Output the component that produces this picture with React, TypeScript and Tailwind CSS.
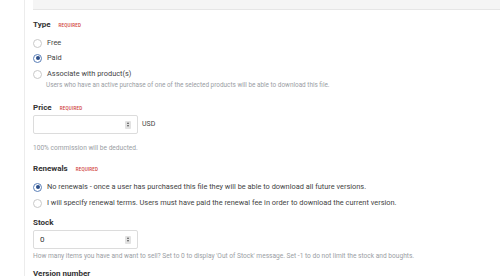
import React from 'react';

const Required = () => (
  <span className="ml-[8px] text-[4.5px] font-medium uppercase tracking-[0.2px] text-[#d0403a]">Required</span>
);

const Label = ({ children, required }: { children: React.ReactNode; required?: boolean }) => (
  <div className="flex items-baseline text-[8px] font-bold leading-[12px] text-[#333]">
    {children}
    {required && <Required />}
  </div>
);

const Radio = ({ checked, label, tall }: { checked?: boolean; label: string; tall?: boolean }) => (
  <label
    className={`flex items-center gap-[5px] text-[7.4px] text-[#444] ${tall ? 'leading-[12px]' : 'leading-[10px]'}`}
  >
    <span
      className={`flex h-[9px] w-[9px] shrink-0 items-center justify-center rounded-full border bg-white ${
        checked ? 'border-[#5a7fb8]' : 'border-[#c9c9c9]'
      }`}
    >
      {checked && <span className="h-[4px] w-[4px] rounded-full bg-[#2c4f8a]" />}
    </span>
    {label}
  </label>
);

const Spinner = () => (
  <span className="flex h-[8px] w-[6px] flex-col items-center justify-center gap-[1px] rounded-[1px] bg-[#e2e2e2]">
    <span className="h-0 w-0 border-x-[1.5px] border-b-[2px] border-x-transparent border-b-[#555]" />
    <span className="h-0 w-0 border-x-[1.5px] border-t-[2px] border-x-transparent border-t-[#555]" />
  </span>
);

const NumberInput = ({ value }: { value?: string }) => (
  <div className="flex h-[19px] w-[105px] items-center justify-between rounded-[2px] border border-[#dcdcdc] bg-white pl-[6px] pr-[6px] text-[8px] text-[#333]">
    <span>{value}</span>
    <Spinner />
  </div>
);

const Help = ({ children, size = 'text-[6.6px]' }: { children: React.ReactNode; size?: string }) => (
  <div className={`${size} leading-[8px] text-[#9a9ea4]`}>{children}</div>
);

export default function App() {
  return (
    <div className="h-[276px] w-[500px] overflow-hidden bg-white font-['Roboto',sans-serif]">
      <div className="ml-[24px] h-full border-l border-[#ececec] pl-[8px]">
        <div className="h-[10px] border-b border-[#e6e6e6] bg-[#f5f5f5]" />

        <div className="mt-[9px]">
          <Label required>Type</Label>
          <div className="mt-[5px] flex flex-col gap-[3px]">
            <Radio tall label="Free" />
            <Radio tall checked label="Paid" />
            <div className="mt-[1px]">
              <Radio tall label="Associate with product(s)" />
              <div className="mt-[1px] pl-[13px]">
                <Help size="text-[6.4px]">
                  Users who have an active purchase of one of the selected products will be able to download this file.
                </Help>
              </div>
            </div>
          </div>
        </div>

        <div className="mt-[13px]">
          <Label required>Price</Label>
          <div className="flex items-center gap-[4px]">
            <NumberInput />
            <span className="text-[7px] text-[#444]">USD</span>
          </div>
          <div className="mt-[10px]">
            <Help>100% commission will be deducted.</Help>
          </div>
        </div>

        <div className="mt-[11px]">
          <Label required>Renewals</Label>
          <div className="mt-[6px] flex flex-col gap-[6px]">
            <Radio checked label="No renewals - once a user has purchased this file they will be able to download all future versions." />
            <Radio label="I will specify renewal terms. Users must have paid the renewal fee in order to download the current version." />
          </div>
        </div>

        <div className="mt-[9px]">
          <Label>Stock</Label>
          <div className="mt-[1px]">
            <NumberInput value="0" />
          </div>
          <div className="mt-[3px]">
            <Help>How many items you have and want to sell? Set to 0 to display 'Out of Stock' message. Set -1 to do not limit the stock and boughts.</Help>
          </div>
        </div>

        <div className="mt-[8px]">
          <Label>Version number</Label>
        </div>
      </div>
    </div>
  );
}
